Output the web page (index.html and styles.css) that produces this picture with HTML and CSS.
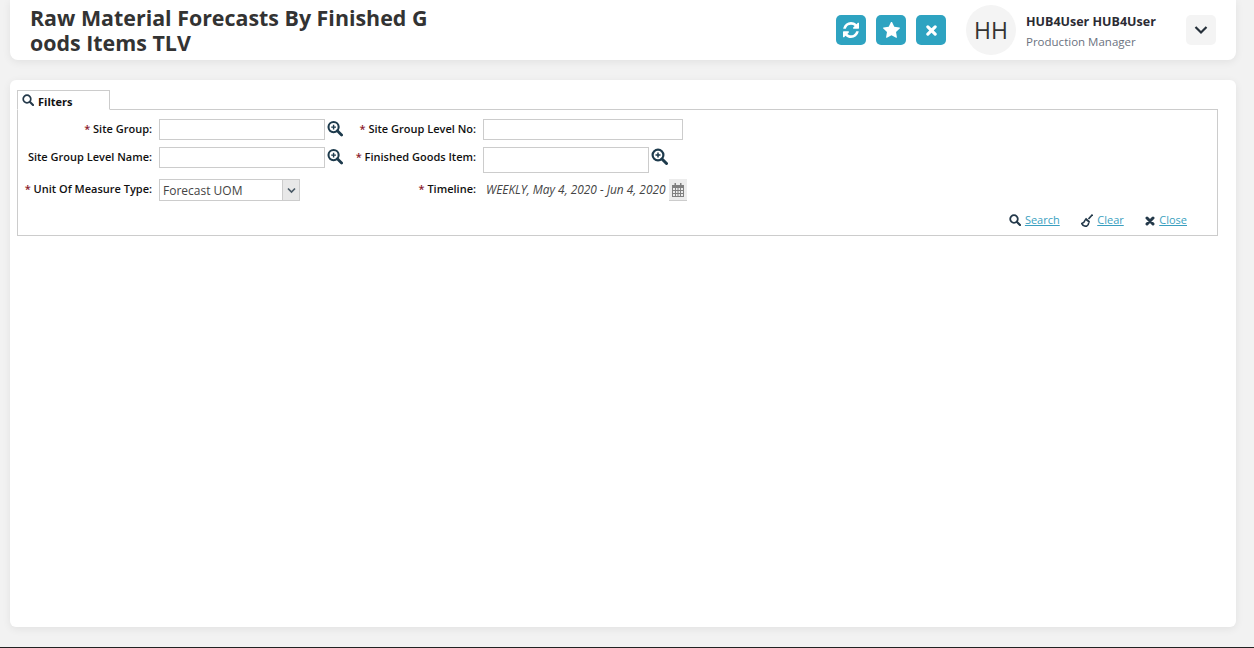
FILE: index.html
```html
<!DOCTYPE html>
<html lang="en">
<head>
    <meta charset="UTF-8">
    <meta name="viewport" content="width=device-width, initial-scale=1.0">
    <title>Raw Material Forecasts By Finished Goods Items TLV</title>
    <link rel="stylesheet" href="styles.css">
</head>
<body>
    <div class="page">
        <header class="top-card">
            <h1 class="page-title">Raw Material Forecasts By Finished Goods Items TLV</h1>
            <div class="top-actions">
                <button class="icon-btn" type="button" aria-label="Refresh">
                    <svg width="16" height="16" viewBox="0 0 1536 1536"><path fill="#fff" d="M1511 928q0 5-1 7-64 268-268 434.5t-478 166.5q-146 0-282.5-55t-243.5-157l-129 129q-19 19-45 19t-45-19-19-45v-448q0-26 19-45t45-19h448q26 0 45 19t19 45-19 45l-137 137q71 66 161 102t187 36q134 0 250-65t186-179q11-17 53-117 8-23 30-23h192q13 0 22.5 9.5t9.5 22.5zm25-800v448q0 26-19 45t-45 19h-448q-26 0-45-19t-19-45 19-45l138-138q-148-137-349-137-134 0-250 65t-186 179q-11 17-53 117-8 23-30 23h-199q-13 0-22.5-9.5t-9.5-22.5v-7q65-268 270-434.5t480-166.5q146 0 284 55.5t245 156.5l130-129q19-19 45-19t45 19 19 45z"/></svg>
                </button>
                <button class="icon-btn" type="button" aria-label="Favourite">
                    <svg width="17" height="17" viewBox="64 100 1664 1600"><path fill="#fff" d="M1728 647q0 22-26 48l-363 354 86 500q1 7 1 20 0 21-10.5 35.5t-30.5 14.5q-19 0-40-12l-449-236-449 236q-22 12-40 12-21 0-31.5-14.5t-10.5-35.5q0-6 2-20l86-500-364-354q-25-27-25-48 0-37 56-46l502-73 225-455q19-41 49-41t49 41l225 455 502 73q56 9 56 46z"/></svg>
                </button>
                <button class="icon-btn" type="button" aria-label="Close">
                    <svg width="11" height="11" viewBox="0 0 12 12"><path d="M2 2l8 8M10 2l-8 8" stroke="#fff" stroke-width="3.4" stroke-linecap="round"/></svg>
                </button>
            </div>
            <div class="avatar">HH</div>
            <div class="user-info">
                <div class="user-name">HUB4User HUB4User</div>
                <div class="user-role">Production Manager</div>
            </div>
            <button class="menu-btn" type="button" aria-label="User menu">
                <svg width="14" height="10" viewBox="0 0 14 10"><path d="M1.500 2l5.500 5.500L12.500 2" fill="none" stroke="#26303a" stroke-width="2.200"/></svg>
            </button>
        </header>

        <main class="main-card">
            <div class="tab">
                <svg class="tab-icon" width="12" height="12" viewBox="0 0 12 12"><circle cx="5" cy="5" r="3.8" fill="none" stroke="#24394a" stroke-width="1.7"/><path d="M8 8l3 3" stroke="#24394a" stroke-width="2.1" stroke-linecap="round"/></svg>
                <span class="tab-text">Filters</span>
            </div>
            <section class="panel">
                <form class="filter-grid">
                    <label class="field-label"><span class="req">*</span> Site Group:</label>
                    <div class="field">
                        <input class="text-input" type="text">
                        <svg class="lookup" width="17" height="17" viewBox="0 0 17 17"><circle cx="7" cy="7" r="5.4" fill="none" stroke="#1d3a4c" stroke-width="2.2"/><path d="M11 11l4.500 4.500" stroke="#1d3a4c" stroke-width="3" stroke-linecap="round"/><path d="M7 4.500v5M4.500 7h5" stroke="#1d3a4c" stroke-width="1.5"/></svg>
                    </div>
                    <label class="field-label"><span class="req">*</span> Site Group Level No:</label>
                    <div class="field">
                        <input class="text-input wide" type="text">
                    </div>

                    <label class="field-label">Site Group Level Name:</label>
                    <div class="field">
                        <input class="text-input" type="text">
                        <svg class="lookup" width="17" height="17" viewBox="0 0 17 17"><circle cx="7" cy="7" r="5.4" fill="none" stroke="#1d3a4c" stroke-width="2.2"/><path d="M11 11l4.500 4.500" stroke="#1d3a4c" stroke-width="3" stroke-linecap="round"/><path d="M7 4.500v5M4.500 7h5" stroke="#1d3a4c" stroke-width="1.5"/></svg>
                    </div>
                    <label class="field-label"><span class="req">*</span> Finished Goods Item:</label>
                    <div class="field">
                        <input class="text-input tall" type="text">
                        <svg class="lookup" width="17" height="17" viewBox="0 0 17 17"><circle cx="7" cy="7" r="5.4" fill="none" stroke="#1d3a4c" stroke-width="2.2"/><path d="M11 11l4.500 4.500" stroke="#1d3a4c" stroke-width="3" stroke-linecap="round"/><path d="M7 4.500v5M4.500 7h5" stroke="#1d3a4c" stroke-width="1.5"/></svg>
                    </div>

                    <label class="field-label"><span class="req">*</span> Unit Of Measure Type:</label>
                    <div class="field">
                        <div class="combo">
                            <span class="combo-value">Forecast UOM</span>
                            <span class="combo-arrow">
                                <svg width="9" height="7" viewBox="0 0 9 7"><path d="M1 1.500l3.500 3.500 3.500-3.500" fill="none" stroke="#4a5a66" stroke-width="1.7"/></svg>
                            </span>
                        </div>
                    </div>
                    <label class="field-label"><span class="req">*</span> Timeline:</label>
                    <div class="field timeline">
                        <span class="timeline-value">WEEKLY, May 4, 2020 - Jun 4, 2020</span>
                        <span class="calendar-btn">
                            <svg width="12" height="14" viewBox="0 0 12 14"><path fill="#808080" fill-rule="evenodd" d="M0 2h12v12H0zM1 5v2h2V5zm3 0v2h1.500V5zm2.500 0v2H8V5zM9 5v2h2V5zM1 8v2h2V8zm3 0v2h1.500V8zm2.500 0v2H8V8zM9 8v2h2V8zM1 11v2h2v-2zm3 0v2h1.500v-2zm2.500 0v2H8v-2zM9 11v2h2v-2z"/><path fill="#808080" d="M2.500 0h1.500v3H2.500zM8 0h1.500v3H8z"/></svg>
                        </span>
                    </div>
                </form>
                <div class="panel-actions">
                    <span class="action">
                        <svg width="12" height="12" viewBox="0 0 12 12"><circle cx="5" cy="5" r="3.8" fill="none" stroke="#24394a" stroke-width="1.8"/><path d="M8 8l3 3" stroke="#24394a" stroke-width="2.2" stroke-linecap="round"/></svg>
                        <a href="#">Search</a>
                    </span>
                    <span class="action">
                        <svg width="12" height="13" viewBox="0 0 12 13"><path d="M11.500 0.500L7.500 5" stroke="#24394a" stroke-width="1.600"/><path fill="#24394a" d="M5 3.800l4 3.400-.6 1.800L3.500 5.500z"/><path d="M4.200 6C3.500 8 2.500 9 .8 9.600 1.500 11.500 3 12.300 5.500 12.300 7 11.500 7.700 10 7.800 8.500" fill="none" stroke="#24394a" stroke-width="1.600"/></svg>
                        <a href="#">Clear</a>
                    </span>
                    <span class="action">
                        <svg class="close-icon" width="10" height="10" viewBox="0 0 10 10"><path d="M2 2l6 6M8 2l-6 6" stroke="#24394a" stroke-width="3" stroke-linecap="round"/></svg>
                        <a href="#">Close</a>
                    </span>
                </div>
            </section>
        </main>
        <div class="bottom-line"></div>
    </div>
</body>
</html>
```

FILE: styles.css
```css
* {
    box-sizing: border-box;
}
body {
    margin: 0;
    padding: 0;
    background-color: #f2f2f2;
    font-family: "Open Sans", sans-serif;
    color: #333;
}
.page {
    height: 100vh;
    display: flex;
    flex-direction: column;
    overflow: hidden;
}

/* top bar */
.top-card {
    height: 60px;
    margin: 0 18px 0 10px;
    padding-right: 20px;
    display: flex;
    align-items: center;
    flex-shrink: 0;
    background: #fff;
    border-radius: 0 0 8px 8px;
    box-shadow: 0 2px 8px rgba(0, 0, 0, 0.07);
}
.page-title {
    width: 402px;
    margin: 0 0 0 20px;
    font-size: 21.4px;
    line-height: 25px;
    font-weight: 700;
    color: #333;
    word-break: break-all;
}
.top-actions {
    display: flex;
    gap: 10px;
    margin-left: auto;
}
.icon-btn {
    width: 30px;
    height: 30px;
    padding: 0;
    display: flex;
    align-items: center;
    justify-content: center;
    background-color: #2ea3c1;
    border: none;
    border-radius: 5px;
}
.avatar {
    width: 50px;
    height: 50px;
    margin-left: 20px;
    display: flex;
    align-items: center;
    justify-content: center;
    background-color: #f4f4f4;
    border-radius: 50%;
    font-size: 23px;
    color: #333;
}
.user-info {
    width: 170px;
    padding: 3px 0 0 10px;
}
.user-name {
    font-size: 12.5px;
    line-height: 18px;
    font-weight: 700;
    color: #2b2b33;
}
.user-role {
    margin-top: 2px;
    font-size: 11.5px;
    line-height: 18px;
    color: #6b7280;
}
.menu-btn {
    width: 30px;
    height: 30px;
    padding: 0;
    display: flex;
    align-items: center;
    justify-content: center;
    background-color: #f4f4f4;
    border: none;
    border-radius: 5px;
}

/* main card */
.main-card {
    flex: 1;
    margin: 20px 18px 20px 10px;
    padding: 10px 18px 0 7px;
    background: #fff;
    border-radius: 6px;
    box-shadow: 0 2px 8px rgba(0, 0, 0, 0.07);
}
.tab {
    width: 93px;
    height: 20px;
    margin-bottom: -1px;
    padding-left: 4px;
    display: flex;
    align-items: center;
    gap: 4px;
    position: relative;
    background: #fff;
    border: 1px solid #ccc;
    border-bottom-color: #fff;
    font-size: 11px;
    font-weight: 700;
    color: #111;
}
.tab-text {
    padding-top: 2px;
}
.panel {
    height: 127px;
    border: 1px solid #ccc;
}
.filter-grid {
    display: grid;
    grid-template-columns: 141px 184px 140px auto;
    grid-template-rows: 28px 32px 22px;
    padding-top: 9px;
    align-items: start;
}
.field-label {
    padding-right: 7px;
    text-align: right;
    font-size: 11px;
    line-height: 20px;
    font-weight: 600;
    color: #111;
}
.req {
    color: #8b1a2b;
}
.field {
    display: flex;
    align-items: flex-start;
    gap: 2px;
}
.text-input {
    width: 166px;
    height: 21px;
    padding: 0 4px;
    background: #fff;
    border: 1px solid #ccc;
}
.text-input.wide {
    width: 200px;
}
.text-input.tall {
    height: 26px;
}
.lookup {
    margin-top: 1px;
}
.combo {
    width: 141px;
    height: 22px;
    display: flex;
    background: #fff;
    border: 1px solid #ccc;
}
.combo-value {
    flex: 1;
    padding-left: 3px;
    font-size: 12px;
    line-height: 21px;
    color: #444;
}
.combo-arrow {
    width: 17px;
    display: flex;
    align-items: center;
    justify-content: center;
    background-color: #e8e8e8;
    border-left: 1px solid #ccc;
}
.timeline {
    align-items: center;
    gap: 3px;
    padding-left: 3px;
    height: 22px;
}
.timeline-value {
    font-size: 11.9px;
    line-height: 20px;
    margin-top: -2px;
    font-style: italic;
    color: #444;
    white-space: nowrap;
}
.calendar-btn {
    width: 18px;
    height: 22px;
    display: flex;
    align-items: center;
    justify-content: center;
    background-color: #ececec;
    border-bottom: 1px solid #ccc;
}
.panel-actions {
    margin-top: 10px;
    padding-right: 30px;
    display: flex;
    justify-content: flex-end;
    align-items: center;
    gap: 21.5px;
}
.action {
    display: flex;
    align-items: center;
    gap: 4px;
    font-size: 11px;
    line-height: 18px;
}
.action a {
    color: #3a9fc0;
}
.close-icon {
    margin-top: 2px;
}
.bottom-line {
    height: 1px;
    flex-shrink: 0;
    background-color: #222;
}
```
